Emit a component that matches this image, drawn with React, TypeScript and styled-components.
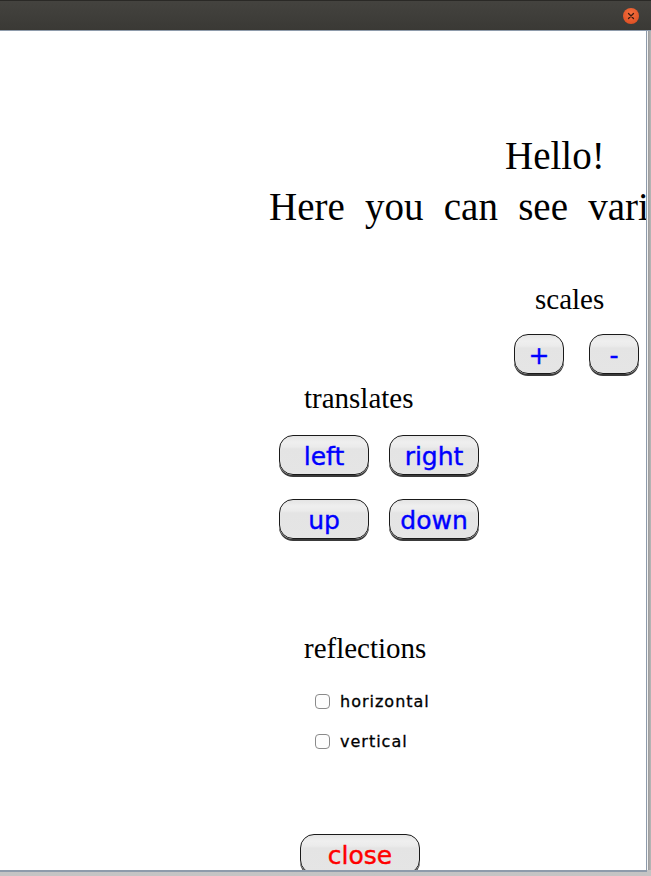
import React, { useState } from "react";
import styled, { createGlobalStyle } from "styled-components";

const GlobalStyle = createGlobalStyle`
  html, body {
    margin: 0;
    padding: 0;
    overflow: hidden;
    background: #b4b4b4;
  }
`;

const Window = styled.div`
  width: 651px;
  height: 876px;
  display: flex;
  flex-direction: column;
  background: linear-gradient(#a8a8a8, #c4c4c4);
`;

const TitleBar = styled.div`
  height: 31px;
  flex: none;
  display: flex;
  align-items: center;
  justify-content: flex-end;
  padding-right: 12px;
  background: linear-gradient(#44433f, #3a3935);
  border-top: 1px solid #2a2926;
  border-bottom: 1px solid #8e9bab;
  box-sizing: border-box;
`;

const CloseDot = styled.div`
  width: 16px;
  height: 16px;
  border-radius: 50%;
  background: radial-gradient(circle at 50% 35%, #f4703f, #d9481d);
  display: flex;
  align-items: center;
  justify-content: center;
  margin-top: 1px;
`;

const Body = styled.div`
  flex: none;
  display: flex;
  height: 841px;
`;

const Canvas = styled.div`
  width: 646px;
  height: 839px;
  flex: none;
  background: #ffffff;
  overflow: hidden;
  border-right: 1px solid #8e9bab;
  border-bottom: 2px solid #8e9bab;
`;

const Heading = styled.div`
  margin-top: 99px;
  font-family: "Liberation Serif", "Times New Roman", serif;
  font-size: 39px;
  line-height: 51px;
  color: #000;
  white-space: nowrap;
`;

const HeadLine = styled.div<{ $indent: number }>`
  padding-left: ${(p) => p.$indent}px;
  word-spacing: 10.5px;
`;

const SectionLabel = styled.div<{ $indent: number; $top: number }>`
  margin-top: ${(p) => p.$top}px;
  padding-left: ${(p) => p.$indent}px;
  font-family: "Liberation Serif", "Times New Roman", serif;
  font-size: 29px;
  line-height: 34px;
  color: #000;
`;

const ButtonRow = styled.div<{ $indent: number; $top: number }>`
  margin-top: ${(p) => p.$top}px;
  margin-left: ${(p) => p.$indent}px;
  display: flex;
  gap: 25px;
`;

const ButtonGrid = styled.div`
  margin-top: 20px;
  margin-left: 279px;
  display: grid;
  grid-template-columns: 90px 90px;
  column-gap: 20px;
  row-gap: 24px;
`;

const PillButton = styled.button<{ $w: number; $color?: string }>`
  width: ${(p) => p.$w}px;
  height: 40px;
  padding: 3px 0 0;
  box-sizing: border-box;
  border: 1.5px solid #1a1a1a;
  border-radius: 14px;
  background: linear-gradient(#e4e4e4 0px, #efefef 6px, #ebebeb 11px, #e4e4e4 13px, #e5e5e5 100%);
  box-shadow: 0 2px 0 #3a3a3a;
  color: ${(p) => p.$color || "#0000ff"};
  font-family: "DejaVu Sans", Verdana, sans-serif;
  font-size: 25px;
  line-height: 36px;
  -webkit-text-stroke: 0.4px ${(p) => p.$color || "#0000ff"};
  cursor: pointer;
`;

const CheckList = styled.div`
  margin-top: 16px;
  margin-left: 315px;
  display: flex;
  flex-direction: column;
`;

const CheckRow = styled.label`
  height: 40px;
  display: flex;
  align-items: center;
  gap: 10px;
  font-family: "DejaVu Sans", "Noto Sans", sans-serif;
  font-size: 16px;
  letter-spacing: 1px;
  color: #000;
  -webkit-text-stroke: 0.3px #000;
  cursor: pointer;
`;

const Box = styled.span<{ $on: boolean }>`
  width: 13px;
  height: 13px;
  border: 1px solid #8a8a8a;
  border-radius: 4px;
  background: ${(p) => (p.$on ? "#5a8dd6" : "#fdfdfd")};
  flex: none;
`;

const CloseWrap = styled.div`
  margin-top: 73px;
  margin-left: 300px;
`;

const RightEdge = styled.div`
  flex: 1;
  border-left: 1px solid #f4f4f4;
  background: linear-gradient(90deg, #9a9a9a, #b8b8b8);
  height: 839px;
`;

export default function App() {
  const [checks, setChecks] = useState({ horizontal: false, vertical: false });
  const toggle = (k: "horizontal" | "vertical") =>
    setChecks((c) => ({ ...c, [k]: !c[k] }));

  return (
    <>
      <GlobalStyle />
      <Window>
        <TitleBar>
          <CloseDot>
            <svg width="8" height="8" viewBox="0 0 8 8">
              <path d="M1.5 1.5 L6.5 6.5 M6.5 1.5 L1.5 6.5" stroke="#3a1a10" strokeWidth="1.3" strokeLinecap="round" />
            </svg>
          </CloseDot>
        </TitleBar>
        <Body>
          <Canvas>
            <Heading>
              <HeadLine $indent={505}>Hello!</HeadLine>
              <HeadLine $indent={269}>Here you can see various transformations</HeadLine>
            </Heading>

            <SectionLabel $indent={535} $top={50}>scales</SectionLabel>
            <ButtonRow $indent={514} $top={18}>
              <PillButton $w={50}>+</PillButton>
              <PillButton $w={50}>-</PillButton>
            </ButtonRow>

            <SectionLabel $indent={304} $top={7}>translates</SectionLabel>
            <ButtonGrid>
              <PillButton $w={90}>left</PillButton>
              <PillButton $w={90}>right</PillButton>
              <PillButton $w={90}>up</PillButton>
              <PillButton $w={90}>down</PillButton>
            </ButtonGrid>

            <SectionLabel $indent={304} $top={92}>reflections</SectionLabel>
            <CheckList>
              <CheckRow onClick={() => toggle("horizontal")}>
                <Box $on={checks.horizontal} />
                horizontal
              </CheckRow>
              <CheckRow onClick={() => toggle("vertical")}>
                <Box $on={checks.vertical} />
                vertical
              </CheckRow>
            </CheckList>

            <CloseWrap>
              <PillButton $w={120} $color="#ff0000">close</PillButton>
            </CloseWrap>
          </Canvas>
          <RightEdge />
        </Body>
      </Window>
    </>
  );
}
